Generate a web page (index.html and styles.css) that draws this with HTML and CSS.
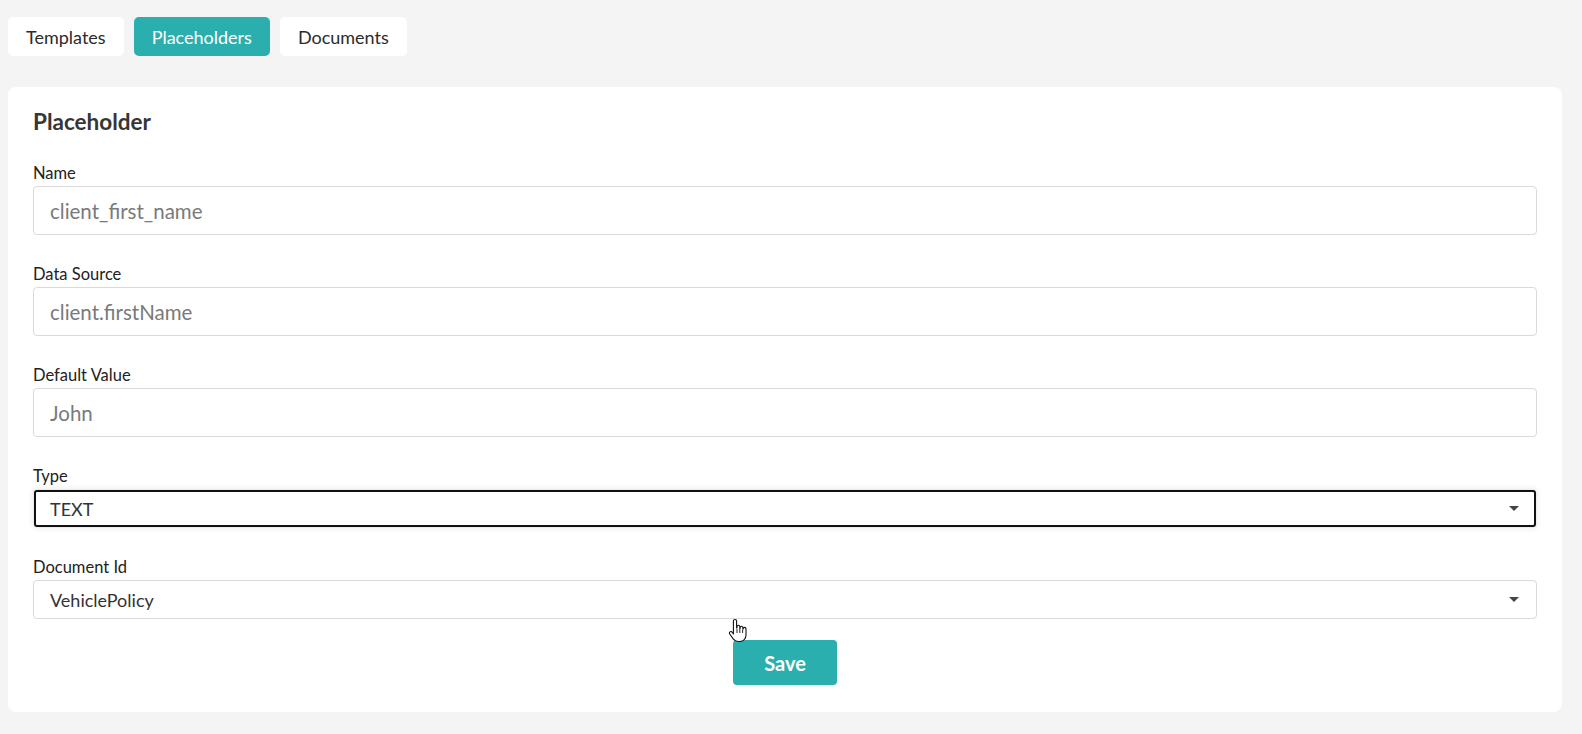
FILE: index.html
```html
<!DOCTYPE html>
<html lang="en">
<head>
  <meta charset="UTF-8" />
  <title>Placeholders</title>
  <link rel="stylesheet" href="styles.css">
</head>
<body>
  <nav class="tabs">
    <button class="tab">Templates</button>
    <button class="tab active">Placeholders</button>
    <button class="tab">Documents</button>
  </nav>

  <form class="card">
    <h2>Placeholder</h2>

    <div class="field">
      <label for="name">Name</label>
      <input id="name" type="text" placeholder="client_first_name">
    </div>

    <div class="field">
      <label for="source">Data Source</label>
      <input id="source" type="text" placeholder="client.firstName">
    </div>

    <div class="field">
      <label for="default">Default Value</label>
      <input id="default" type="text" placeholder="John">
    </div>

    <div class="field">
      <label for="type">Type</label>
      <div class="select-wrap focused">
        <select id="type">
          <option>TEXT</option>
          <option>NUMBER</option>
          <option>DATE</option>
        </select>
      </div>
    </div>

    <div class="field">
      <label for="document">Document Id</label>
      <div class="select-wrap">
        <select id="document">
          <option>VehiclePolicy</option>
        </select>
      </div>
    </div>

    <button type="submit" class="save">Save</button>
  </form>

  <!-- mouse pointer over the form -->
  <svg class="pointer" width="20" height="25" viewBox="0 0 20 25">
    <path d="M7 1.5c.9 0 1.6.7 1.6 1.6V10h.4V8.6c0-.8.6-1.4 1.4-1.4s1.4.6 1.4 1.4v1.9h.3v-.9c0-.8.6-1.4 1.4-1.4s1.4.6 1.4 1.4v1.4h.3v-.2c0-.8.6-1.4 1.4-1.4s1.4.6 1.4 1.4V17c0 3.3-2.4 6.5-6 6.5h-2c-2.2 0-3.6-1-4.8-2.6L1.7 16c-.5-.7-.4-1.6.3-2.1.7-.5 1.6-.4 2.1.3L5.4 16V3.1c0-.9.7-1.6 1.6-1.6z" fill="#fff" stroke="#111" stroke-width="1.1" stroke-linejoin="round"/>
    <path d="M9 11v4M11.8 11v4M14.6 11.5v3.5" stroke="#111" stroke-width="0.9" fill="none"/>
  </svg>
</body>
</html>
```

FILE: styles.css
```css
body {
  font-family: Lato, "Open Sans", sans-serif;
  background: #f4f4f4;
  margin: 0;
  padding: 17px 20px 22px 8px;
  color: #333;
}

.tabs {
  display: flex;
  gap: 10px;
}

.tab {
  height: 39px;
  padding: 0 18px;
  border: none;
  border-radius: 5px;
  background: #fff;
  font-family: inherit;
  font-size: 18px;
  color: #2b2b2b;
  cursor: pointer;
}
.tab.active {
  background: #2aafae;
  color: #fff;
}

.card {
  margin-top: 31px;
  background: #fff;
  border-radius: 8px;
  padding: 20px 25px 27px;
  display: flex;
  flex-direction: column;
}

.card h2 {
  margin: 0;
  font-size: 22.5px;
  line-height: 30px;
  font-weight: 700;
  color: #363636;
}

.field {
  display: flex;
  flex-direction: column;
  margin-top: 29px;
}
.field:first-of-type {
  margin-top: 26px;
}

.field label {
  font-size: 16.5px;
  line-height: 20px;
  margin-bottom: 3px;
  color: #222;
}

.field input {
  height: 49px;
  box-sizing: border-box;
  border: 1px solid #dadada;
  border-radius: 4px;
  padding: 0 16px;
  font-family: inherit;
  font-size: 20.5px;
  color: #333;
}
.field input::placeholder {
  color: #7a7a7a;
}

.select-wrap {
  position: relative;
}
.select-wrap::after {
  content: "";
  position: absolute;
  right: 18px;
  top: 17px;
  border-left: 5px solid transparent;
  border-right: 5px solid transparent;
  border-top: 5px solid #444;
  pointer-events: none;
}

.select-wrap select {
  width: 100%;
  height: 39px;
  box-sizing: border-box;
  appearance: none;
  -webkit-appearance: none;
  background: #fff;
  border: 1px solid #dadada;
  border-radius: 4px;
  padding: 0 16px;
  font-family: inherit;
  font-size: 18px;
  color: #333;
}

.select-wrap.focused select {
  outline: 2px solid #111;
  outline-offset: -3px;
  border-color: #ececec;
  box-shadow: 0 0 4px 2px rgba(0, 0, 0, 0.05);
}

.save {
  align-self: center;
  margin-top: 21px;
  width: 104px;
  height: 45px;
  border: none;
  border-radius: 4px;
  background: #2aafae;
  color: #fff;
  font-family: inherit;
  font-size: 20px;
  font-weight: 700;
  cursor: pointer;
}

.pointer {
  position: absolute;
  left: 728px;
  top: 618px;
}
```
